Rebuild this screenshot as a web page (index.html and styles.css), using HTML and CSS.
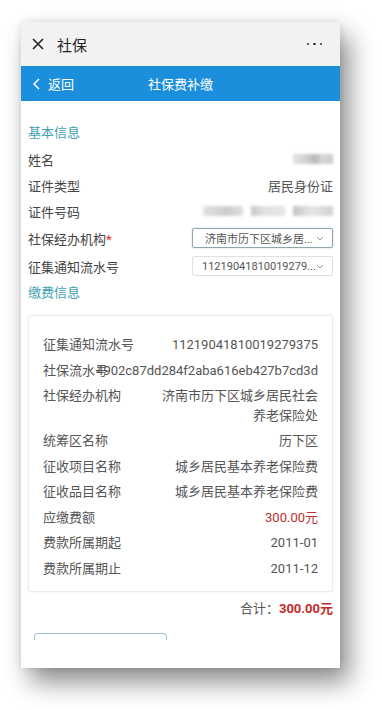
FILE: index.html
```html
<!DOCTYPE html>
<html lang="zh">
<head>
<meta charset="utf-8">
<title>社保费补缴</title>
<link rel="stylesheet" href="styles.css">
</head>
<body>
<div class="phone">
  <div class="titlebar">
    <svg class="close" width="12" height="12" viewBox="0 0 12 12"><path d="M1 1L11 11M11 1L1 11" stroke="#222" stroke-width="1.6" fill="none"/></svg>
    <span class="apptitle">社保</span>
    <span class="more"><i></i><i></i><i></i></span>
  </div>
  <div class="navbar">
    <span class="back"><svg width="7" height="12" viewBox="0 0 7 12"><path d="M6 1L1 6L6 11" stroke="#fff" stroke-width="1.5" fill="none"/></svg>返回</span>
    <span class="navtitle">社保费补缴</span>
    <span></span>
  </div>
  <div class="content">
    <div class="sec-head">基本信息</div>
    <div class="row"><span class="label">姓名</span><span class="blur b-name"></span></div>
    <div class="row"><span class="label">证件类型</span><span class="value">居民身份证</span></div>
    <div class="row"><span class="label">证件号码</span><span class="idblur"><span class="blur b1"></span><span class="blur b2"></span><span class="blur b3"></span></span></div>
    <div class="row row-sel"><span class="label">社保经办机构<em>*</em></span><span class="select active">济南市历下区城乡居...<svg width="8" height="5" viewBox="0 0 8 5"><path d="M1 1L4 4L7 1" stroke="#999" stroke-width="1" fill="none"/></svg></span></div>
    <div class="row row-sel"><span class="label">征集通知流水号</span><span class="select">11219041810019279...<svg width="8" height="5" viewBox="0 0 8 5"><path d="M1 1L4 4L7 1" stroke="#999" stroke-width="1" fill="none"/></svg></span></div>
    <div class="sec-head">缴费信息</div>
    <div class="card">
      <div class="crow"><span class="clabel">征集通知流水号</span><span class="cval">11219041810019279375</span></div>
      <div class="crow"><span class="clabel">社保流水号</span><span class="cval nowrap">4902c87dd284f2aba616eb427b7cd3d</span></div>
      <div class="crow"><span class="clabel">社保经办机构</span><span class="cval">济南市历下区城乡居民社会养老保险处</span></div>
      <div class="crow"><span class="clabel">统筹区名称</span><span class="cval">历下区</span></div>
      <div class="crow"><span class="clabel">征收项目名称</span><span class="cval">城乡居民基本养老保险费</span></div>
      <div class="crow"><span class="clabel">征收品目名称</span><span class="cval">城乡居民基本养老保险费</span></div>
      <div class="crow"><span class="clabel">应缴费额</span><span class="cval red">300.00元</span></div>
      <div class="crow"><span class="clabel">费款所属期起</span><span class="cval">2011-01</span></div>
      <div class="crow"><span class="clabel">费款所属期止</span><span class="cval">2011-12</span></div>
    </div>
    <div class="total">合计：<b>300.00元</b></div>
    <div class="btn-top"></div>
  </div>
</div>
</body>
</html>
```
FILE: styles.css
```css
* { box-sizing: border-box; }
html, body { margin: 0; padding: 0; background: #fff; }
body {
  font-family: Roboto, "Noto Sans CJK SC", sans-serif;
  width: 382px;
  height: 710px;
  overflow: hidden;
  padding-top: 22px;
  padding-left: 21px;
}
.phone {
  width: 319px;
  height: 646px;
  background: #fff;
  overflow: hidden;
  box-shadow: 9px 14px 24px rgba(0,0,0,0.45), 0 0 8px rgba(0,0,0,0.1);
}
.titlebar {
  height: 44px;
  background: #f2f2f2;
  display: flex;
  align-items: center;
  padding: 0 18px 0 11px;
}
.close { display: block; flex: none; }
.apptitle {
  margin-left: 13px;
  font-size: 15px;
  color: #222;
  flex: 1;
}
.more { display: flex; gap: 4px; align-items: center; }
.more i { display: block; width: 2.5px; height: 2.5px; border-radius: 50%; background: #333; }
.navbar {
  height: 35px;
  background: #1b8fdb;
  display: grid;
  grid-template-columns: 1fr auto 1fr;
  align-items: center;
  color: #fff;
  font-size: 13px;
  padding: 0 12px;
}
.back { display: flex; align-items: center; gap: 8px; }
.back svg { display: block; }
.navtitle { text-align: center; }
.content { padding: 19px 7px 0 7px; }
.sec-head {
  height: 26px;
  line-height: 26px;
  font-size: 13px;
  color: #3f9fb6;
}
.row {
  height: 26px;
  display: flex;
  align-items: center;
  justify-content: space-between;
  font-size: 13px;
}
.row-sel { height: 28px; }
.label { color: #444; }
.label em { font-style: normal; color: #d9302e; }
.value { color: #555; }
.blur { display: inline-block; height: 10px; filter: blur(1.6px); }
.b-name { width: 40px; background: linear-gradient(90deg, #e4e4e4 0%, #cfcfcf 35%, #b8b8b8 55%, #d8d8d8 75%, #c8c8c8 100%); }
.idblur { display: flex; gap: 8px; align-items: center; }
.b1 { width: 40px; background: linear-gradient(90deg, #e2e2e2, #cdcdcd 60%, #e0e0e0); }
.b2 { width: 34px; background: linear-gradient(90deg, #c6c6c6, #e2e2e2 40%, #e6e6e6); }
.b3 { width: 40px; background: linear-gradient(90deg, #c2c2c2 0%, #d8d8d8 25%, #e6e6e6 50%, #d0d0d0 100%); }
.select {
  width: 141px;
  height: 20px;
  border: 1px solid #e0e0e0;
  border-radius: 2px;
  display: flex;
  align-items: center;
  justify-content: space-between;
  padding: 0 8px 0 9px;
  font-size: 11px;
  color: #555;
  white-space: nowrap;
}
.select.active {
  border-color: #8ea5ae;
  padding-left: 12px;
  box-shadow: 0 0 2px rgba(120,150,160,0.4);
}
.select svg { display: block; flex: none; }
.card {
  margin-top: 9px;
  border: 1px solid #ececec;
  border-radius: 2px;
  box-shadow: 0 0 3px rgba(0,0,0,0.06);
  padding: 16px 14px 10px 14px;
  font-size: 13px;
  color: #555;
}
.crow {
  display: grid;
  padding: 3px 0;
  line-height: 19.5px;
}
.crow > span { grid-area: 1 / 1; }
.clabel { justify-self: start; }
.cval { justify-self: end; text-align: right; max-width: 158px; }
.cval.nowrap { max-width: none; white-space: nowrap; }
.red { color: #c0302f; }
.total {
  margin-top: 4px;
  height: 26px;
  line-height: 26px;
  text-align: right;
  font-size: 13px;
  color: #555;
}
.total b { color: #c42b2b; font-weight: 700; }
.btn-top {
  margin: 11px 0 0 6px;
  width: 133px;
  height: 7px;
  border: 1px solid #9cc3d2;
  border-bottom: none;
  border-radius: 4px 4px 0 0;
}
```
